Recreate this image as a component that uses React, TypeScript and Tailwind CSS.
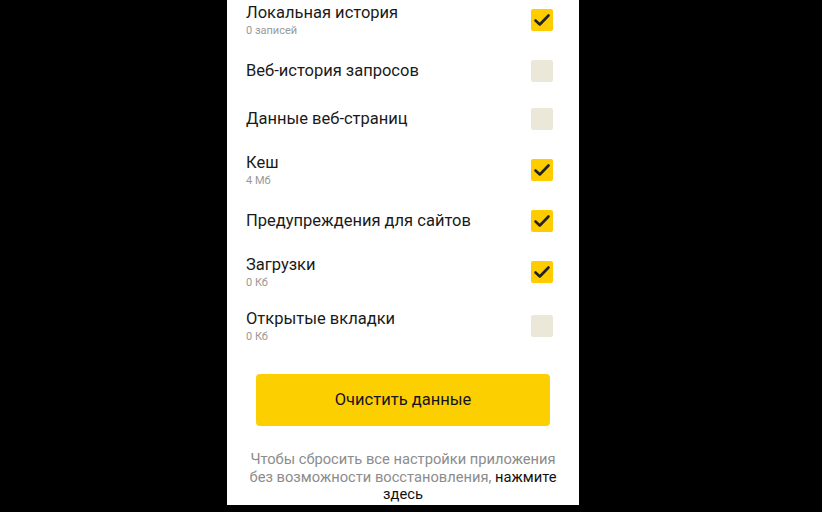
interface Item {
  title: string
  sub?: string
  checked: boolean
}

const items: Item[] = [
  { title: 'Локальная история', sub: '0 записей', checked: true },
  { title: 'Веб-история запросов', checked: false },
  { title: 'Данные веб-страниц', checked: false },
  { title: 'Кеш', sub: '4 Мб', checked: true },
  { title: 'Предупреждения для сайтов', checked: true },
  { title: 'Загрузки', sub: '0 Кб', checked: true },
  { title: 'Открытые вкладки', sub: '0 Кб', checked: false },
]

function Box({ checked }: { checked: boolean }) {
  return (
    <span
      className={
        checked
          ? 'flex h-[22px] w-[22px] items-center justify-center rounded-[2px] bg-[#ffcc00]'
          : 'flex h-[22px] w-[22px] items-center justify-center rounded-[2px] bg-[#ebe7d9]'
      }
    >
      {checked && (
        <svg viewBox="0 0 22 22" className="h-[22px] w-[22px]" fill="none">
          <path d="M4.5 11.5 8.8 15.5 17.5 6.5" stroke="#222" strokeWidth="2.6" strokeLinecap="round" strokeLinejoin="round" />
        </svg>
      )}
    </span>
  )
}

export default function App() {
  return (
    <div className="h-[512px] w-[822px] overflow-hidden bg-black" style={{ fontFamily: 'Roboto, "Noto Sans", sans-serif' }}>
      <div className="ml-[227px] h-full w-[352px] bg-white">
        <ul className="-mt-[7px] pl-[19px] pr-[26px]">
          {items.map((it) => (
            <li
              key={it.title}
              className={
                it.sub
                  ? 'flex h-[54px] items-center justify-between'
                  : 'flex h-[48px] items-center justify-between'
              }
            >
              <div className="flex flex-col">
                <span className="text-[16.5px] leading-[20px] text-[#1a1a1a]">{it.title}</span>
                {it.sub && <span className="mt-[1px] text-[11px] leading-[14px] text-[#999]">{it.sub}</span>}
              </div>
              <Box checked={it.checked} />
            </li>
          ))}
        </ul>

        <div className="px-[29px] pt-[21px]">
          <button className="flex h-[52px] w-full items-center justify-center rounded-[4px] bg-[#fccf00] text-[16.5px] text-[#15151f]">
            Очистить данные
          </button>
        </div>

        <p className="mx-auto mt-[25px] w-[318px] text-center text-[14.7px] leading-[17.5px] text-[#8c8c8c]">
          Чтобы сбросить все настройки приложения без возможности восстановления,{' '}
          <span className="text-[#111]">нажмите здесь</span>
        </p>
      </div>
    </div>
  )
}
